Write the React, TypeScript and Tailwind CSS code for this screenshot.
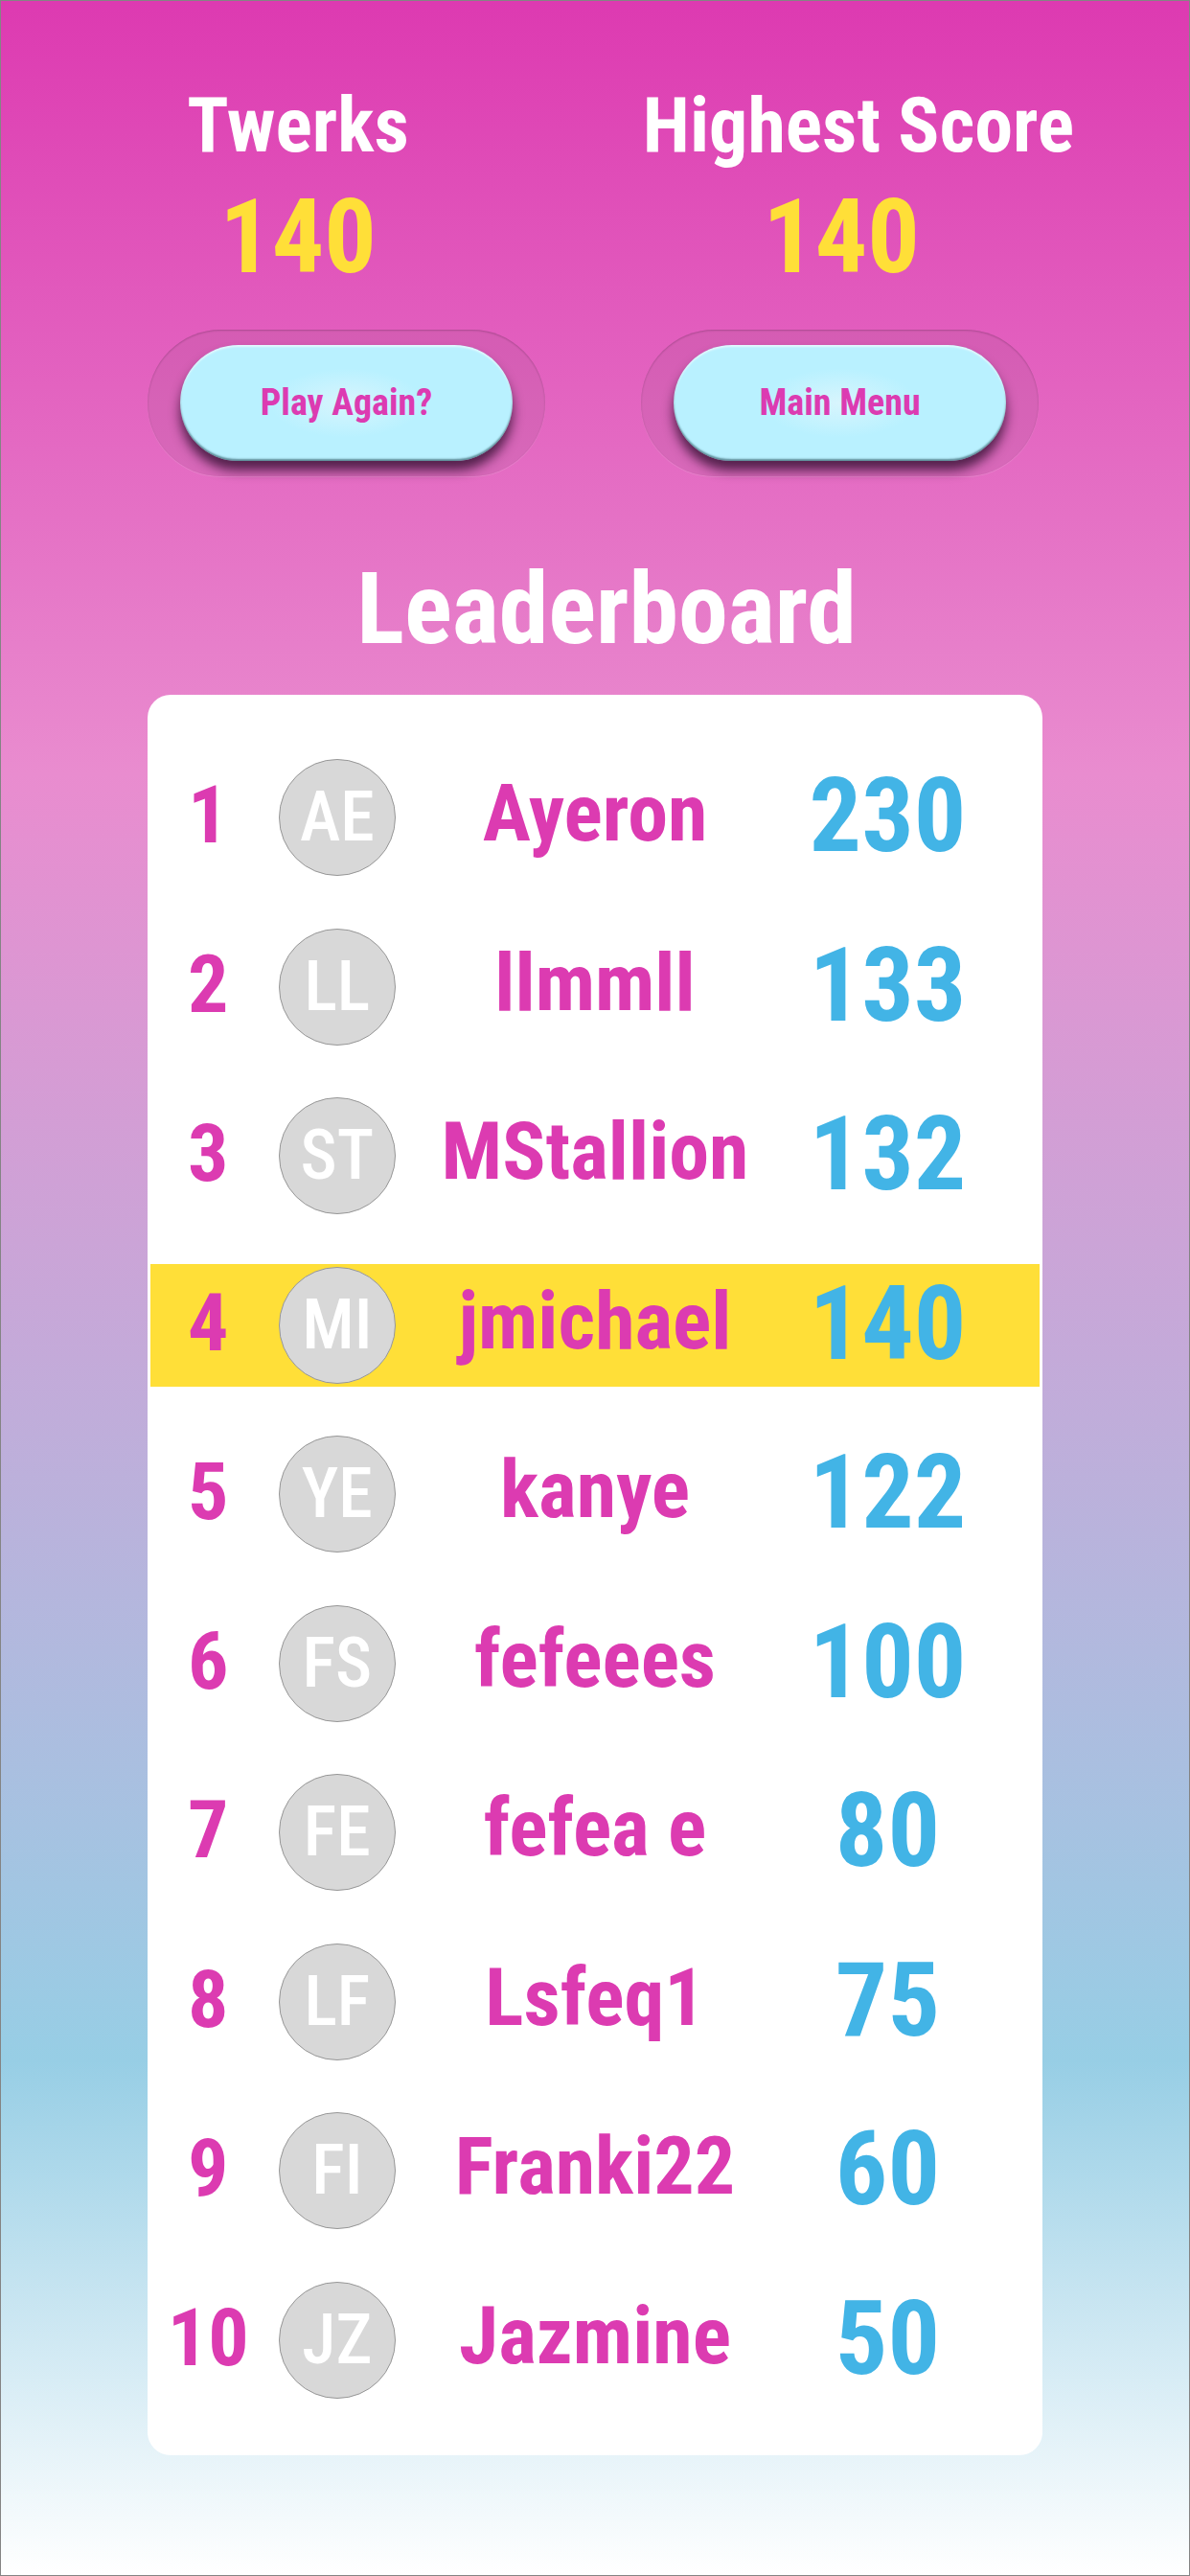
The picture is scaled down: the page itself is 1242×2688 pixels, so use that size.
import { useState } from "react";

type Player = {
  rank: number;
  initials: string;
  name: string;
  score: number;
};

const players: Player[] = [
  { rank: 1, initials: "AE", name: "Ayeron", score: 230 },
  { rank: 2, initials: "LL", name: "llmmll", score: 133 },
  { rank: 3, initials: "ST", name: "MStallion", score: 132 },
  { rank: 4, initials: "MI", name: "jmichael", score: 140 },
  { rank: 5, initials: "YE", name: "kanye", score: 122 },
  { rank: 6, initials: "FS", name: "fefeees", score: 100 },
  { rank: 7, initials: "FE", name: "fefea e", score: 80 },
  { rank: 8, initials: "LF", name: "Lsfeq1", score: 75 },
  { rank: 9, initials: "FI", name: "Franki22", score: 60 },
  { rank: 10, initials: "JZ", name: "Jazmine", score: 50 },
];

function PillButton({ label, onClick }: { label: string; onClick?: () => void }) {
  return (
    <div className="flex-1 rounded-full bg-[#8c5a82]/15 px-[34px] py-4 shadow-[inset_0_1px_2px_rgba(0,0,0,0.2),0_1px_1px_rgba(255,255,255,0.15)]">
      <button
        type="button"
        onClick={onClick}
        className="h-[121px] w-full rounded-full bg-[#b9f1ff] bg-[radial-gradient(ellipse_80px_36px_at_center,#d8f5fd,#b9f1ff)] text-[38px] font-bold text-[#dc3bb1] shadow-[inset_0_2px_2px_rgba(255,255,255,0.6),inset_0_-2px_2px_rgba(30,70,80,0.6),0_10px_12px_rgba(40,10,40,0.75)]"
      >
        {label}
      </button>
    </div>
  );
}

export default function App() {
  const [score] = useState(140);
  const [highest] = useState(140);
  const currentPlayer = "jmichael";

  return (
    <main className="min-h-screen border border-[#848484] bg-[linear-gradient(to_bottom,#dd3ab1_0%,#e98ccf_30%,#97cee5_80%,#ffffff_100%)] pt-[72px] pb-[124px] font-['Marker_Felt','Roboto_Condensed','Liberation_Sans_Narrow',sans-serif]">
      {/* Scores */}
      <section className="flex text-center font-bold leading-[116px]">
        <div className="w-1/2">
          <h2 className="text-[80px] text-white">Twerks</h2>
          <p className="text-[108px] text-[#ffdf38]">{score}</p>
        </div>
        <div className="w-1/2 pr-[70px]">
          <h2 className="text-[80px] whitespace-nowrap text-white">Highest Score</h2>
          <p className="pr-9 text-[108px] text-[#ffdf38]">{highest}</p>
        </div>
      </section>

      {/* Actions */}
      <div className="mt-[39px] mr-[157px] ml-[153px] flex gap-[100px]">
        <PillButton label="Play Again?" />
        <PillButton label="Main Menu" />
      </div>

      {/* Leaderboard */}
      <h1
        id="leaderboard"
        className="mt-[81px] mb-[31px] pl-6 text-center text-[104px] leading-[116px] font-bold text-white"
      >
        Leaderboard
      </h1>
      <div className="mx-[153px] rounded-3xl bg-white px-[3px] pt-10 pb-8">
        <table aria-labelledby="leaderboard" className="h-[1765px] w-full table-fixed text-center font-bold">
          <colgroup>
            <col className="w-[13%]" />
            <col className="w-[16%]" />
            <col className="w-[42%]" />
            <col />
          </colgroup>
          <tbody>
            {players.map((player) => {
              const bar =
                player.name === currentPlayer
                  ? "flex h-32 items-center justify-center bg-[#ffdf38]"
                  : "flex h-32 items-center justify-center";
              return (
                <tr key={player.rank}>
                  <th scope="row" className="p-0 text-[84px] leading-none text-[#dc3bb1]">
                    <div className={bar}>
                      <span className="pb-1">{player.rank}</span>
                    </div>
                  </th>
                  <td className="p-0">
                    <div className={bar}>
                      <span className="flex size-[122px] items-center justify-center rounded-full border border-[#979797] bg-[#d8d8d8] text-[72px] leading-none font-medium text-white">
                        {player.initials}
                      </span>
                    </div>
                  </td>
                  <td className="p-0 text-[84px] leading-none text-[#dc3bb1]">
                    <div className={bar}>
                      <span className="pb-2 whitespace-nowrap">{player.name}</span>
                    </div>
                  </td>
                  <td className="p-0 text-[108px] leading-none text-[#42b4e6]">
                    <div className={bar}>
                      <span className="pr-12 pb-1">{player.score}</span>
                    </div>
                  </td>
                </tr>
              );
            })}
          </tbody>
        </table>
      </div>
    </main>
  );
}
